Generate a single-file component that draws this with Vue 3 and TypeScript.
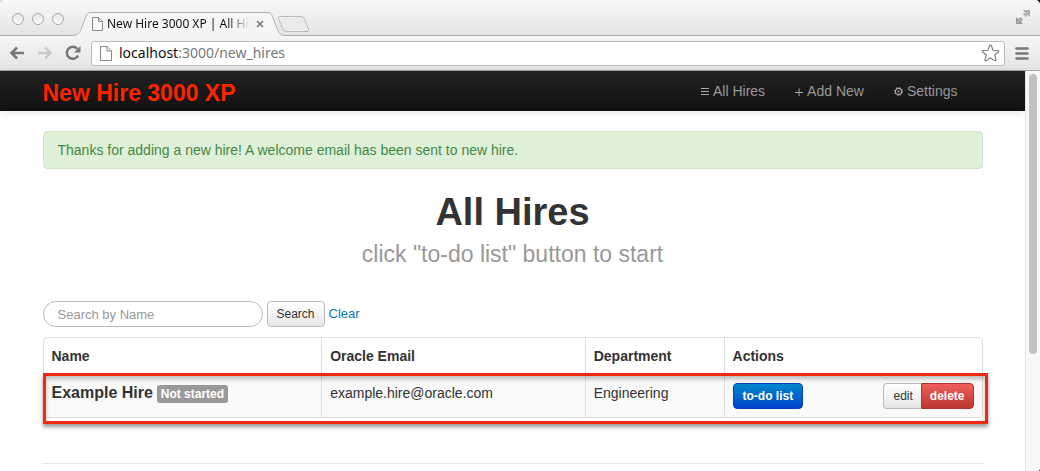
<script setup lang="ts">
import { ref } from 'vue'

interface Hire {
  name: string
  status: string
  email: string
  department: string
}

const query = ref('')
const address = 'localhost:3000/new_hires'
const [host, rest] = [address.slice(0, 9), address.slice(9)]
const hires = ref<Hire[]>([
  {
    name: 'Example Hire',
    status: 'Not started',
    email: 'example.hire@oracle.com',
    department: 'Engineering',
  },
])
</script>

<template>
  <div class="window">
    <header class="titlebar">
      <div class="lights"><i></i><i></i><i></i></div>
      <div class="tab">
        <svg class="tab-shape" width="214" height="24" viewBox="0 0 214 24" aria-hidden="true">
          <path d="M0 24V23.5C5 23.500 7 22 8.500 18.500L14 4.500C15 1.500 16.500.5 19 .5H195C198 .5 199.500 1.500 200.500 4.500L206 18.500C207.500 22 209 23.500 214 23.500V24Z" fill="#f5f5f5" />
          <path d="M0 23.500C5 23.500 7 22 8.500 18.500L14 4.500C15 1.500 16.500.5 19 .5H195C198 .5 199.500 1.500 200.500 4.500L206 18.500C207.500 22 209 23.500 214 23.500" fill="none" stroke="#b0b0b0" />
        </svg>
        <svg class="page-icon" width="11" height="14" viewBox="0 0 11 14" aria-hidden="true">
          <path d="M.5.5H6.500L10.500 4.500V13.500H.5ZM6.500.5V4.500H10.500" fill="#fff" stroke="#8a8a8a" />
        </svg>
        <span class="tab-title">New Hire 3000 XP | All Hires</span>
        <button class="tab-close" type="button" aria-label="Close tab">
          <svg width="8" height="8" viewBox="0 0 8 8"><path d="M1 1L7 7M7 1L1 7" stroke="#777" stroke-width="1.500" /></svg>
        </button>
      </div>
      <button class="new-tab" type="button" aria-label="New tab">
        <svg width="33" height="17" viewBox="0 0 33 17">
          <path d="M3 .5H24Q26.500.5 27.500 3L31.500 13Q32.500 15.500 30 15.500H10Q7 15.500 6 13L1.500 3Q.5.5 3 .5Z" fill="#ebebeb" stroke="#bcbcbc" />
        </svg>
      </button>
      <button class="fullscreen" type="button" aria-label="Full screen">
        <svg width="14" height="14" viewBox="0 0 14 14">
          <path d="M7 0H14V7L11.800 4.800L9.500 7L7 4.500L9.200 2.200Z" fill="#aaa" />
          <path d="M0 7V14H7L4.800 11.800L7 9.500L4.500 7L2.200 9.200Z" fill="#999" />
          <path d="M8.500 5.500L12.500 1.500M1.500 12.500L5.500 8.500" stroke="#d5d5d5" />
        </svg>
      </button>
    </header>

    <div class="toolbar">
      <button type="button" aria-label="Back">
        <svg width="16" height="14" viewBox="0 0 16 14"><path d="M15 7H3M8 1.500L2.500 7L8 12.500" fill="none" stroke="#777" stroke-width="2.600" /></svg>
      </button>
      <button type="button" aria-label="Forward">
        <svg width="16" height="14" viewBox="0 0 16 14"><path d="M1 7H13M8 1.500L13.500 7L8 12.500" fill="none" stroke="#c9c9c9" stroke-width="2.400" /></svg>
      </button>
      <button type="button" aria-label="Reload">
        <svg width="16" height="16" viewBox="0 0 16 16">
          <path d="M13.200 10.500A6 6 0 1 1 12.300 3.800" fill="none" stroke="#777" stroke-width="2.500" />
          <path d="M15.500 1V7.500H9Z" fill="#777" />
        </svg>
      </button>
      <div class="address">
        <svg width="12" height="15" viewBox="0 0 12 15" aria-hidden="true">
          <path d="M.5.5H7L11.500 5V14.500H.5ZM7 .5V5H11.500" fill="#fff" stroke="#858585" />
        </svg>
        <span class="url">{{ host }}<span>{{ rest }}</span></span>
        <button type="button" aria-label="Bookmark">
          <svg width="19" height="18" viewBox="0 0 19 18">
            <path d="M9.500 1Q10.200 1 10.500 2L12 6.300L16.800 6.500Q18.500 6.800 17.300 8L13.700 11L15 15.500Q15.300 17.300 13.700 16.600L9.500 14L5.300 16.600Q3.700 17.300 4 15.500L5.300 11L1.700 8Q.5 6.800 2.200 6.500L7 6.300L8.500 2Q8.800 1 9.500 1Z" fill="#fff" stroke="#777" stroke-width="1.100" />
          </svg>
        </button>
      </div>
      <button type="button" aria-label="Menu">
        <svg width="14" height="13" viewBox="0 0 14 13"><path d="M1.500 1.500H12.500M1.500 6.500H12.500M1.500 11.500H12.500" stroke="#777" stroke-width="2.600" stroke-linecap="round" /></svg>
      </button>
    </div>

    <div class="viewport">
      <div class="page">
        <nav class="navbar">
          <div class="container nav-inner">
            <a class="brand" href="#">New Hire 3000 XP</a>
            <div class="links">
              <a href="#">
                <svg width="8" height="9" viewBox="0 0 8 9" aria-hidden="true"><path d="M0 1.500H8M0 4.500H8M0 7.500H8" stroke="#aaa" /></svg>
                All Hires
              </a>
              <a href="#">
                <svg width="8" height="9" viewBox="0 0 8 9" aria-hidden="true"><path d="M0 5.500H8M4 1.500V9" stroke="#aaa" /></svg>
                Add New
              </a>
              <a href="#">
                <svg width="9" height="9" viewBox="0 0 9 9" aria-hidden="true">
                  <circle cx="4.500" cy="4.500" r="3.100" fill="none" stroke="#aaa" stroke-width="1.200" />
                  <circle cx="4.500" cy="4.500" r="4" fill="none" stroke="#aaa" stroke-dasharray="1.400 1.740" />
                  <circle cx="4.500" cy="4.500" r="1" fill="#aaa" />
                </svg>
                Settings
              </a>
            </div>
          </div>
        </nav>

        <main class="container">
          <div class="alert" role="status">Thanks for adding a new hire! A welcome email has been sent to new hire.</div>
          <h1>All Hires</h1>
          <p class="lead">click "to-do list" button to start</p>

          <form class="search" @submit.prevent>
            <input v-model="query" type="text" placeholder="Search by Name" aria-label="Search by Name" />
            <button class="btn" type="submit">Search</button>
            <a href="#" @click.prevent="query = ''">Clear</a>
          </form>

          <div class="table-wrap">
            <table>
              <colgroup>
                <col class="c-name" /><col class="c-email" /><col class="c-dept" /><col />
              </colgroup>
              <thead>
                <tr>
                  <th scope="col">Name</th>
                  <th scope="col">Oracle Email</th>
                  <th scope="col">Department</th>
                  <th scope="col">Actions</th>
                </tr>
              </thead>
              <tbody>
                <tr v-for="hire in hires" :key="hire.email">
                  <td><strong>{{ hire.name }}</strong> <span class="label">{{ hire.status }}</span></td>
                  <td>{{ hire.email }}</td>
                  <td>{{ hire.department }}</td>
                  <td>
                    <div class="actions">
                      <button class="btn primary" type="button">to-do list</button>
                      <div class="group">
                        <button class="btn" type="button">edit</button>
                        <button class="btn danger" type="button">delete</button>
                      </div>
                    </div>
                  </td>
                </tr>
              </tbody>
            </table>
            <div class="highlight" aria-hidden="true"></div>
          </div>
          <hr />
        </main>
      </div>
      <div class="scrollbar" aria-hidden="true"><div class="thumb"></div></div>
    </div>
  </div>
</template>

<style>
body {
  background: linear-gradient(to right, #ddd 50%, #111 50%);
}
</style>

<style scoped>
* {
  box-sizing: border-box;
}
.window {
  display: flex;
  flex-direction: column;
  min-height: 100vh;
  overflow: hidden;
  border-radius: 5px 5px 3px 0;
  background: #fff;
  color: #333;
  font: 14px/20px "Liberation Sans", Arial, sans-serif;
}
svg {
  display: block;
  flex: none;
}
.titlebar button,
.toolbar button {
  padding: 0;
  border: 0;
  background: none;
}
a {
  text-decoration: none;
}
.titlebar {
  display: flex;
  align-items: flex-end;
  height: 36px;
  padding: 0 10px 0 12px;
  background: linear-gradient(#f8f8f8, #e4e4e4);
  box-shadow: inset 0 -1px #b0b0b0;
}
.lights {
  display: flex;
  gap: 8px;
  padding-bottom: 11px;
}
.lights i {
  width: 12px;
  height: 12px;
  border: 1px solid #aaa;
  border-radius: 50%;
  background: linear-gradient(#e6e6e6, #fafafa);
}
.tab {
  position: relative;
  display: flex;
  align-items: center;
  width: 214px;
  height: 24px;
  margin-left: 8px;
  padding: 0 22px 0 20px;
  font: 12px/16px "Noto Sans", "Open Sans", sans-serif;
  color: #111;
}
.tab-shape {
  position: absolute;
  inset: 0;
}
.page-icon,
.tab-title,
.tab-close {
  position: relative;
}
.tab-title {
  flex: 1;
  margin: 0 6px 0 4px;
  overflow: hidden;
  white-space: nowrap;
  mask-image: linear-gradient(to right, #000 84%, transparent);
}
.new-tab {
  position: relative;
  margin: 0 auto 3px -9px;
}
.titlebar .fullscreen {
  padding-bottom: 12px;
}
.toolbar {
  display: flex;
  align-items: center;
  gap: 12px;
  height: 35px;
  padding: 0 11px 0 9px;
  background: linear-gradient(#f5f5f5, #e5e5e5);
  border-bottom: 1px solid #a8a8a8;
}
.address {
  display: flex;
  flex: 1;
  align-items: center;
  height: 25px;
  margin: 0 -2px;
  padding: 0 4px 0 8px;
  border: 1px solid #bbb;
  border-radius: 3px;
  background: #fff;
}
.url {
  flex: 1;
  margin-left: 7px;
  font: 14px/20px "Noto Sans", "Open Sans", sans-serif;
  color: #111;
}
.url span {
  color: #777;
}
.viewport {
  display: flex;
  flex: 1;
}
.page {
  flex: 1;
  min-width: 0;
}
.container {
  max-width: 940px;
  margin: 0 auto;
}
.navbar {
  background: linear-gradient(#222, #111);
  box-shadow: 0 1px 8px rgba(0, 0, 0, 0.12);
}
.nav-inner {
  display: flex;
  align-items: center;
  justify-content: space-between;
  height: 40px;
}
.brand {
  padding-top: 3px;
  font-size: 23px;
  line-height: 24px;
  font-weight: bold;
  color: #ff2200;
}
.links {
  display: flex;
  gap: 30px;
  padding-right: 25px;
}
.links a {
  display: flex;
  align-items: center;
  gap: 4px;
  color: #999;
}
.alert {
  margin-top: 20px;
  padding: 8px 14px;
  border: 1px solid #d0e5c0;
  border-radius: 4px;
  background: #dff0d8;
  color: #468847;
}
h1 {
  margin: 22px 0 0;
  font-size: 38px;
  line-height: 42px;
  text-align: center;
}
.lead {
  margin: 6px 0 32px;
  font-size: 23px;
  line-height: 30px;
  text-align: center;
  color: #999;
}
.search {
  display: flex;
  align-items: center;
  gap: 4px;
  height: 26px;
  font-size: 13px;
}
.search input {
  width: 220px;
  height: 26px;
  padding: 0 14px;
  border: 1px solid #bbb;
  border-radius: 13px;
  outline: 0;
  background: #fff;
  font: inherit;
  color: #555;
}
.search input::placeholder {
  color: #999;
  opacity: 1;
}
.search a {
  color: #0077c0;
}
.btn {
  height: 26px;
  padding: 0 9px;
  border: 1px solid #bbb;
  border-radius: 4px;
  background: linear-gradient(#fff, #e6e6e6);
  color: #333;
  font: 12px/20px "Liberation Sans", Arial, sans-serif;
}
.btn.primary {
  border-color: #0044b0;
  background: linear-gradient(#0088cc, #0044cc);
  color: #fff;
  font-weight: bold;
}
.btn.danger {
  border-color: #b03530;
  background: linear-gradient(#ee5f5b, #bd362f);
  color: #fff;
  font-weight: bold;
}
.table-wrap {
  position: relative;
  margin-top: 10px;
}
table {
  width: 100%;
  table-layout: fixed;
  border: 1px solid #ddd;
  border-radius: 4px;
  border-spacing: 0;
}
.c-name {
  width: 29.6%;
}
.c-email {
  width: 28.1%;
}
.c-dept {
  width: 14.8%;
}
th,
td {
  padding: 8px;
  text-align: left;
  vertical-align: top;
}
th + th,
td + td {
  border-left: 1px solid #ddd;
}
td {
  border-top: 1px solid #ddd;
  background: #f9f9f9;
}
strong {
  font-size: 16px;
}
.label {
  display: inline-block;
  padding: 0 4px;
  border-radius: 3px;
  background: #999;
  color: #fff;
  font-size: 12px;
  line-height: 18px;
  font-weight: bold;
}
.actions {
  display: flex;
  justify-content: space-between;
}
.group {
  display: flex;
}
.group .btn {
  padding: 0 8px;
}
.group .btn:first-child {
  padding-left: 9px;
  border-right: 0;
  border-radius: 4px 0 0 4px;
}
.group .btn:last-child {
  border-radius: 0 4px 4px 0;
}
.highlight {
  position: absolute;
  top: 36px;
  right: -5px;
  bottom: -6px;
  left: 0;
  border: 3px solid #f02a10;
  box-shadow: 0 3px 4px rgba(0, 0, 0, 0.4), inset 0 3px 4px rgba(0, 0, 0, 0.25);
  pointer-events: none;
}
hr {
  margin: 45px 0 0;
  border: 0;
  border-top: 1px solid #e5e5e5;
}
.scrollbar {
  width: 15px;
  padding: 3px;
  border-left: 1px solid #e4e4e4;
  background: #f8f8f8;
}
.thumb {
  width: 8px;
  height: 71%;
  border-radius: 4px;
  background: #c1c1c1;
}
</style>
